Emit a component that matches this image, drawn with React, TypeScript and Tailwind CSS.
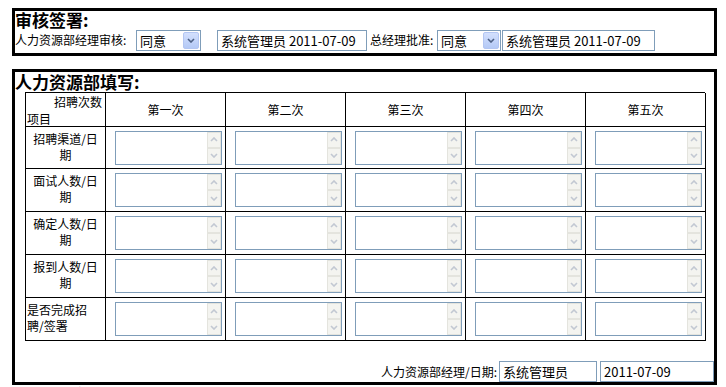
import React from "react";

const font = { fontFamily: "'Noto Sans CJK SC', 'Noto Sans', sans-serif" };

const rows = [
  { label: ["招聘渠道/日", "期"], left: false, h: "h-[42px]" },
  { label: ["面试人数/日", "期"], left: false, h: "h-[43px]" },
  { label: ["确定人数/日", "期"], left: false, h: "h-[43px]" },
  { label: ["报到人数/日", "期"], left: false, h: "h-[43px]" },
  { label: ["是否完成招", "聘/签署"], left: true, h: "h-[43px]" },
];

const cols = ["第一次", "第二次", "第三次", "第四次", "第五次"];

function Chevron({ up, color }: { up?: boolean; color: string }) {
  return (
    <svg width="8" height="5" viewBox="0 0 8 5">
      <path
        d={up ? "M1 4 L4 1 L7 4" : "M1 1 L4 4 L7 1"}
        fill="none"
        stroke={color}
        strokeWidth="1.6"
      />
    </svg>
  );
}

function Select({ className = "", w = "w-[65px]" }: { className?: string; w?: string }) {
  return (
    <div className={`flex items-center ${w} h-[21px] border border-[#7f9db9] bg-white ${className}`}>
      <span className="flex-1 pl-[3px] text-[13px] leading-[19px]">同意</span>
      <div className="w-[16px] h-[17px] mr-[1px] rounded-[2px] border border-[#b3c6f2] bg-gradient-to-b from-[#d3e0fd] to-[#b4c9f6] flex items-center justify-center">
        <Chevron color="#4d6185" />
      </div>
    </div>
  );
}

function TextBox({ text, w, className = "" }: { text: string; w: string; className?: string }) {
  return (
    <div className={`${w} h-[21px] border border-[#7f9db9] bg-white px-[3px] text-[13px] leading-[19px] whitespace-nowrap overflow-hidden ${className}`}>
      {text}
    </div>
  );
}

function ScrollBtn({ up }: { up?: boolean }) {
  return (
    <div className="w-[14px] h-[16px] border border-[#e4e4de] bg-[#f4f4f0] flex items-center justify-center">
      <Chevron up={up} color="#c2c8d2" />
    </div>
  );
}

function TextArea() {
  return (
    <div className="w-[107px] h-[34px] border border-[#7f9db9] bg-white flex justify-end">
      <div className="flex flex-col">
        <ScrollBtn up />
        <ScrollBtn />
      </div>
    </div>
  );
}

export default function App() {
  return (
    <div className="w-[726px] h-[387px] overflow-hidden bg-white text-black" style={font}>
      {/* 审核签署 */}
      <div className="ml-[12px] mt-[8px] w-[705px] h-[48px] border-[3px] border-black">
        <div className="text-[17px] font-bold leading-[18px] h-[18px]">审核签署:</div>
        <div className="flex items-center h-[22px] text-[12px]">
          <span className="w-[121px] whitespace-nowrap">人力资源部经理审核:</span>
          <Select />
          <TextBox text="系统管理员 2011-07-09" w="w-[150px]" className="ml-[16px]" />
          <span className="w-[70px] pl-[3px] whitespace-nowrap">总经理批准:</span>
          <Select w="w-[64px]" />
          <TextBox text="系统管理员 2011-07-09" w="w-[153px]" className="ml-[1px]" />
        </div>
      </div>

      {/* 人力资源部填写 */}
      <div className="ml-[12px] mt-[13px] w-[705px] h-[316px] border-[3px] border-black">
        <div className="text-[17px] font-bold leading-[20px] h-[20px]">人力资源部填写:</div>
        <div className="ml-[10px] w-[680px] grid grid-cols-[80px_repeat(5,120px)] border-l border-t border-black text-[12px]">
          <div className="h-[34px] border-r border-b border-black flex flex-col justify-between pt-[1px]">
            <span className="self-end pr-[3px] leading-[15px]">招聘次数</span>
            <span className="pl-[1px] leading-[15px]">项目</span>
          </div>
          {cols.map((c) => (
            <div key={c} className="h-[34px] border-r border-b border-black flex items-center justify-center">
              {c}
            </div>
          ))}
          {rows.map((r) => (
            <React.Fragment key={r.label.join("")}>
              <div
                className={`${r.h} border-r border-b border-black flex flex-col justify-center leading-[16px] pb-[2px] ${
                  r.left ? "items-start pl-[1px]" : "items-center"
                }`}
              >
                <span>{r.label[0]}</span>
                <span>{r.label[1]}</span>
              </div>
              {cols.map((c) => (
                <div key={c} className={`${r.h} border-r border-b border-black flex items-center pl-[9px]`}>
                  <TextArea />
                </div>
              ))}
            </React.Fragment>
          ))}
        </div>
        <div className="mt-[20px] flex items-center justify-end text-[12px]">
          <span className="mr-[2px] whitespace-nowrap">人力资源部经理/日期:</span>
          <TextBox text="系统管理员" w="w-[98px]" />
          <TextBox text="2011-07-09" w="w-[114px]" className="ml-[3px]" />
        </div>
      </div>
      <div className="ml-[14px] mt-[1px] text-[12px] leading-[14px]">
        备注：招聘完成后由人力资源部经理签署并填写日期。
      </div>
    </div>
  );
}
